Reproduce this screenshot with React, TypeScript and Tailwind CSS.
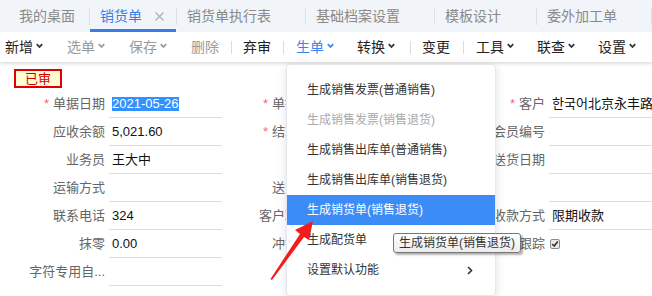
import React from "react";

const font = "font-['Liberation_Sans','Noto_Sans_CJK_SC',sans-serif]";

const Chevron = ({ color = "#333" }: { color?: string }) => (
  <svg width="7" height="6" viewBox="0 0 7 6" className="ml-[3px] -mt-[3px]">
    <path d="M0.8 1.2 L3.5 4 L6.2 1.2" fill="none" stroke={color} strokeWidth="1.8" />
  </svg>
);

const TabSep = () => <div className="h-[17px] w-px bg-[#dcdfe6]" />;
const ToolSep = () => <div className="h-[13px] w-px bg-[#dddddd]" />;

type Row = {
  l1: string;
  r1?: boolean;
  v1?: string;
  sel?: boolean;
  l2: string;
  r2?: boolean;
  l3: string;
  r3?: boolean;
  v3?: string;
  line3?: boolean;
  check?: boolean;
};

const rows: Row[] = [
  { l1: "单据日期", r1: true, v1: "2021-05-26", sel: true, l2: "单据编号", r2: true, l3: "客户", r3: true, v3: "한국어北京永丰路有限公司", line3: true },
  { l1: "应收余额", v1: "5,021.60", l2: "结算方式", r2: true, l3: "会员编号", line3: true },
  { l1: "业务员", v1: "王大中", l2: "部门", l3: "送货日期", line3: true },
  { l1: "运输方式", l2: "送货地址", l3: "", line3: true },
  { l1: "联系电话", v1: "324", l2: "客户联系人", l3: "收款方式", v3: "限期收款", line3: true },
  { l1: "抹零", v1: "0.00", l2: "冲销标记", l3: "是否跟踪", check: true },
  { l1: "字符专用自...", l2: "", l3: "" },
];

const menu = [
  { t: "生成销售发票(普通销售)" },
  { t: "生成销售发票(销售退货)", off: true },
  { t: "生成销售出库单(普通销售)" },
  { t: "生成销售出库单(销售退货)" },
  { t: "生成销货单(销售退货)", on: true },
  { t: "生成配货单" },
  { t: "设置默认功能", sub: true },
];

const Label = ({ text, req, w }: { text: string; req?: boolean; w: string }) => (
  <div className={`${w} flex shrink-0 items-center justify-end whitespace-nowrap text-[13px] text-[#666]`}>
    {req && <span className="mr-[4px] text-[#f56c6c]">*</span>}
    {text}
  </div>
);

export default function App() {
  return (
    <div className={`relative h-[296px] w-[652px] overflow-hidden bg-white ${font}`}>
      {/* tabs */}
      <div className="flex h-[32px] items-center bg-[#f1f4f9] text-[14px] text-[#8a8a8a]">
        <div className="flex h-full w-[89px] items-center pl-[19px]">我的桌面</div>
        <TabSep />
        <div className="flex h-full w-[86px] items-center border-b-[3px] border-[#3a7de8] pl-[10px] pt-[3px] text-[#3a7de8]">
          销货单
          <svg width="9" height="9" viewBox="0 0 9 9" className="ml-[13px]">
            <path d="M0.5 0.5 L8.5 8.5 M8.5 0.5 L0.5 8.5" stroke="#b0b0b0" strokeWidth="1.2" />
          </svg>
        </div>
        <TabSep />
        <div className="flex h-full w-[128px] items-center pl-[10px]">销货单执行表</div>
        <TabSep />
        <div className="flex h-full w-[128px] items-center pl-[10px]">基础档案设置</div>
        <TabSep />
        <div className="flex h-full w-[101px] items-center pl-[10px]">模板设计</div>
        <TabSep />
        <div className="flex h-full w-[114px] items-center pl-[10px]">委外加工单</div>
        <TabSep />
      </div>

      {/* toolbar */}
      <div className="relative z-10 flex h-[30px] items-center bg-white pl-[5px] text-[14px] text-[#222] shadow-[0_2px_3px_rgba(0,0,0,0.13)]">
        <div className="flex items-center">新增<Chevron /></div>
        <div className="ml-[24px] flex items-center text-[#9a9a9a]">选单<Chevron color="#9a9a9a" /></div>
        <div className="ml-[24px] flex items-center text-[#9a9a9a]">保存<Chevron color="#9a9a9a" /></div>
        <div className="ml-[24px] text-[#9a9a9a]">删除</div>
        <div className="ml-[12px]"><ToolSep /></div>
        <div className="ml-[11px]">弃审</div>
        <div className="ml-[12px]"><ToolSep /></div>
        <div className="ml-[12px] flex items-center text-[#3b86f0]">生单<Chevron color="#3b86f0" /></div>
        <div className="ml-[23px] flex items-center">转换<Chevron /></div>
        <div className="ml-[15px]"><ToolSep /></div>
        <div className="ml-[11px]">变更</div>
        <div className="ml-[13px]"><ToolSep /></div>
        <div className="ml-[12px] flex items-center">工具<Chevron /></div>
        <div className="ml-[23px] flex items-center">联查<Chevron /></div>
        <div className="ml-[23px] flex items-center">设置<Chevron /></div>
      </div>

      {/* form */}
      <div className="flex flex-col">
        <div className="ml-[14px] mt-[7px] flex h-[19px] w-[48px] items-center justify-center border-2 border-[#e00000] bg-[#fffbd2] text-[13px] text-[#d40000]">
          已审
        </div>
        <div className="mt-[2px] flex flex-col">
          {rows.map((r, i) => (
            <div key={i} className="flex h-[28px]">
              <Label text={r.l1} req={r.r1} w="w-[105px]" />
              <div className="ml-[4px] flex w-[113px] items-center border-b border-[#dcdcdc] pl-[3px] text-[13px] text-[#111]">
                {r.sel ? (
                  <span className="bg-[#3390ff] leading-[14px] text-white">{r.v1}</span>
                ) : (
                  r.v1
                )}
              </div>
              <Label text={r.l2} req={r.r2} w="w-[102px]" />
              <div className="ml-[4px] w-[113px] border-b border-[#dcdcdc]" />
              <Label text={r.l3} req={r.r3} w="w-[104px]" />
              <div
                className={`ml-[4px] flex flex-1 items-center overflow-hidden whitespace-nowrap pl-[3px] text-[13px] text-[#111] ${
                  r.line3 ? "border-b border-[#dcdcdc]" : ""
                }`}
              >
                {r.check ? (
                  <svg width="10" height="10" viewBox="0 0 10 10" className="-ml-[2px]">
                    <rect x="0.5" y="0.5" width="9" height="9" rx="1.5" fill="#e9e9e9" stroke="#8d8d8d" />
                    <path d="M2.2 5 L4.2 7 L7.8 2.6" fill="none" stroke="#333" strokeWidth="1.6" />
                  </svg>
                ) : (
                  r.v3
                )}
              </div>
            </div>
          ))}
        </div>
      </div>

      {/* dropdown menu */}
      <div className="absolute left-[286px] top-[64px] z-20 flex h-[232px] w-[210px] flex-col rounded-[4px] border border-[#e4e7ed] bg-white py-[10px] text-[12px] text-[#333] shadow-[0_2px_10px_rgba(0,0,0,0.12)]">
        {menu.map((m, i) => (
          <div
            key={i}
            className={`flex h-[30px] shrink-0 items-center justify-between pl-[20px] pr-[22px] ${
              m.on ? "bg-[#3c8cf7] text-white" : m.off ? "text-[#aaaaaa]" : ""
            }`}
          >
            <span>{m.t}</span>
            {m.sub && (
              <svg width="6" height="9" viewBox="0 0 6 9">
                <path d="M1 1 L4.5 4.5 L1 8" fill="none" stroke="#333" strokeWidth="1.6" />
              </svg>
            )}
          </div>
        ))}
      </div>

      {/* tooltip */}
      <div className="absolute left-[393px] top-[233px] z-30 flex h-[20px] items-center rounded-[3px] border border-[#767676] bg-gradient-to-b from-white to-[#ececec] px-[5px] text-[12px] text-[#333] shadow-[2px_2px_2px_rgba(0,0,0,0.3)]">
        生成销货单(销售退货)
      </div>

      {/* red arrow */}
      <svg className="pointer-events-none absolute left-[265px] top-[215px] z-30" width="55" height="70" viewBox="265 215 55 70">
        <polygon points="270.5,279 300,234 295,230 313,221 309,240 304,237 272,280" fill="#f21c1c" />
      </svg>
    </div>
  );
}
